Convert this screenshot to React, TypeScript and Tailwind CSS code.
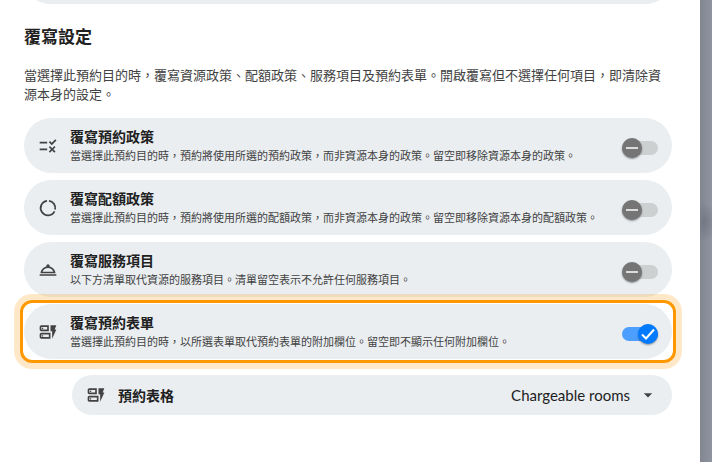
import { useState } from "react";
import type { ComponentType } from "react";
import {
  MdArrowDropDown,
  MdOutlineDynamicForm,
  MdOutlineRoomService,
  MdRule,
} from "react-icons/md";
import clsx from "clsx";

interface Override {
  id: string;
  title: string;
  hint: string;
  icon: ComponentType<{ className?: string }>;
}

function QuotaIcon({ className }: { className?: string }) {
  return (
    <svg viewBox="0 0 20 20" className={className} fill="none" stroke="currentColor" strokeWidth="1.8">
      <path d="M11 2.8A7.3 7.3 0 0 1 17.1 11.5" />
      <path d="M16.5 13.3A7.3 7.3 0 1 1 9 2.8" />
    </svg>
  );
}

const overrides: Override[] = [
  {
    id: "booking",
    title: "覆寫預約政策",
    hint: "當選擇此預約目的時，預約將使用所選的預約政策，而非資源本身的政策。留空即移除資源本身的政策。",
    icon: MdRule,
  },
  {
    id: "quota",
    title: "覆寫配額政策",
    hint: "當選擇此預約目的時，預約將使用所選的配額政策，而非資源本身的政策。留空即移除資源本身的配額政策。",
    icon: QuotaIcon,
  },
  {
    id: "services",
    title: "覆寫服務項目",
    hint: "以下方清單取代資源的服務項目。清單留空表示不允許任何服務項目。",
    icon: MdOutlineRoomService,
  },
  {
    id: "form",
    title: "覆寫預約表單",
    hint: "當選擇此預約目的時，以所選表單取代預約表單的附加欄位。留空即不顯示任何附加欄位。",
    icon: MdOutlineDynamicForm,
  },
];

function Switch({ id, checked, onChange }: { id: string; checked: boolean; onChange: () => void }) {
  return (
    <span className="relative flex h-5 w-9 shrink-0 items-center">
      <input
        id={id}
        type="checkbox"
        role="switch"
        checked={checked}
        onChange={onChange}
        className="h-3.5 w-9 cursor-pointer appearance-none rounded-full bg-[#cdd0d1] checked:bg-[#4d9fff]"
      />
      <span
        className={clsx(
          "pointer-events-none absolute top-0 flex size-5 items-center justify-center rounded-full shadow-[0_1px_2px_rgba(0,0,0,0.4)]",
          checked ? "right-0 bg-[#007aff]" : "left-0 bg-[#757575]"
        )}
      >
        <svg viewBox="0 0 20 20" className="size-5" fill="none" stroke={checked ? "#fff" : "#dcdcdc"} strokeWidth="2">
          <path d={checked ? "M4 10.5l4 4L16 5.5" : "M4 10h12"} />
        </svg>
      </span>
    </span>
  );
}

export default function App() {
  const [enabled, setEnabled] = useState<Record<string, boolean>>({ form: true });

  const toggle = (id: string) => setEnabled((e) => ({ ...e, [id]: !e[id] }));

  return (
    <div className="flex min-h-screen bg-white font-['Noto_Sans_CJK_TC',sans-serif] text-[#212121]">
      <main className="min-w-0 flex-1 pr-7 pb-11 pl-6">
        <div className="h-1 overflow-hidden">
          <div className="-mt-12 h-[52px] rounded-full bg-[#eaeef1]" />
        </div>

        <h2 className="mt-5 text-[17px] leading-6 font-bold">覆寫設定</h2>
        <p className="mt-[17px] text-[13px] leading-[19px] text-[#424242]">
          當選擇此預約目的時，覆寫資源政策、配額政策、服務項目及預約表單。開啟覆寫但不選擇任何項目，即清除資源本身的設定。
        </p>

        <ul className="mt-[15px] flex flex-col gap-[7px]">
          {overrides.map(({ id, title, hint, icon: Icon }) => (
            <li key={id} className="relative">
              <div className="flex min-h-[55px] items-center rounded-full bg-[#eaeef1] px-3.5">
                <Icon className="size-5 shrink-0 text-[#424242]" />
                <label htmlFor={id} className="ml-3 min-w-0 flex-1 cursor-pointer">
                  <span className="block text-[14px] leading-[19px] font-bold">{title}</span>
                  <span className="block text-[11px] leading-[19px] text-[#424242]">{hint}</span>
                </label>
                <div className="pt-1">
                  <Switch id={id} checked={!!enabled[id]} onChange={() => toggle(id)} />
                </div>
              </div>
              {id === "form" && (
                <div className="pointer-events-none absolute -inset-1 rounded-xl border-3 border-[#ff9800] shadow-[0_0_0_6px_rgba(255,152,0,0.22)]" />
              )}
            </li>
          ))}
        </ul>

        <div className="mt-4 ml-12 flex h-10 items-center rounded-full bg-[#eaeef1] px-3.5">
          <MdOutlineDynamicForm className="size-5 shrink-0 text-[#424242]" />
          <label htmlFor="form-select" className="ml-3 flex-1 text-[14px] leading-5 font-bold">
            預約表格
          </label>
          <div className="relative flex items-center">
            <select
              id="form-select"
              className="cursor-pointer appearance-none bg-transparent pr-7 text-right font-[Lato,'Noto_Sans_CJK_TC',sans-serif] text-[15px] leading-5 outline-none"
            >
              <option>Chargeable rooms</option>
            </select>
            <MdArrowDropDown className="pointer-events-none absolute right-0 size-5 text-[#424242]" />
          </div>
        </div>
      </main>

      {/* dimmed page behind the dialog */}
      <div className="w-3 shrink-0 bg-[radial-gradient(12px_20px_at_4px_222px,#737984,transparent),linear-gradient(to_right,#818691,#8f95a0)]" />
    </div>
  );
}
